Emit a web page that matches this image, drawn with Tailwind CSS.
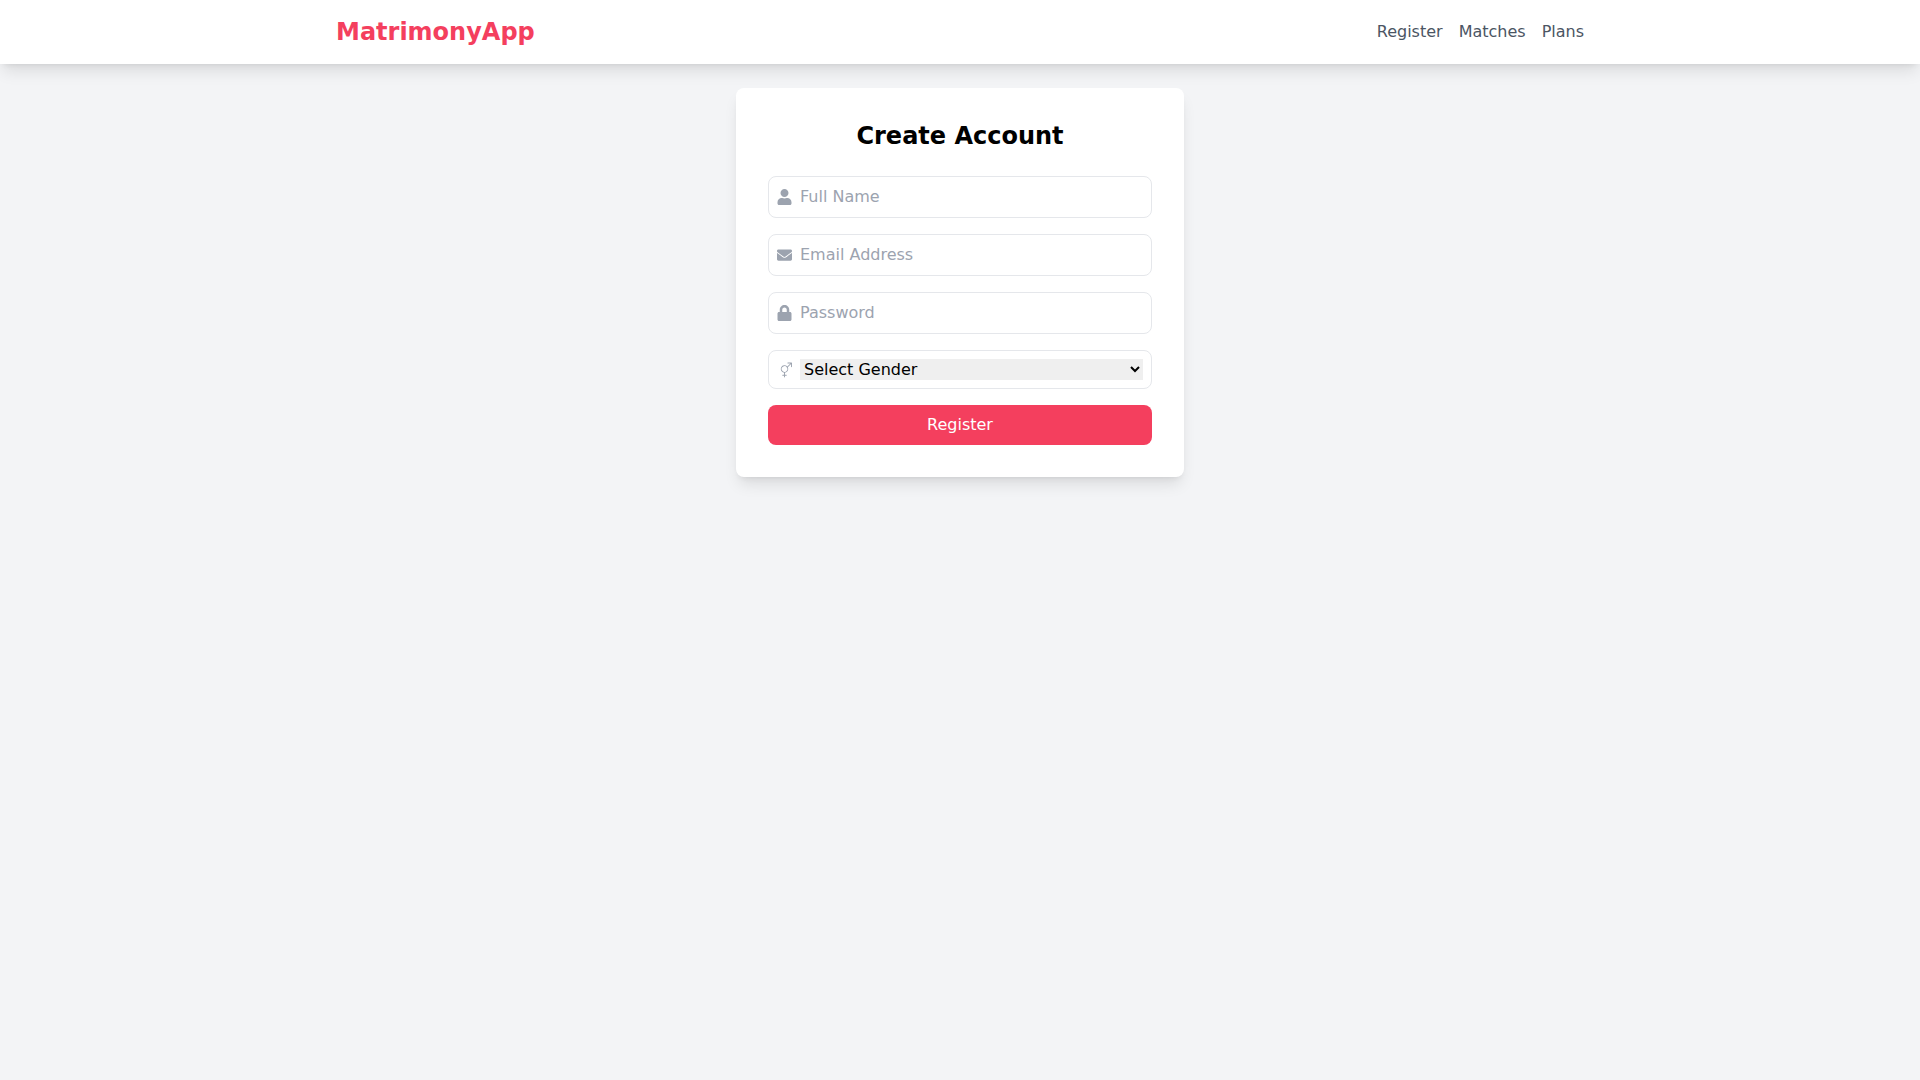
<!DOCTYPE html>
<html lang="en">
	<head>
		<meta charset="utf-8" />
		<meta name="viewport" content="width=device-width, initial-scale=1" />
		<title>MatrimonyApp</title>
		<script src="https://cdn.jsdelivr.net/npm/@tailwindcss/browser@4"></script>
	</head>

	<body class="min-h-screen bg-gray-100 font-['DejaVu_Sans',sans-serif] text-black">
		<header class="bg-white shadow-lg">
			<div class="max-w-7xl mx-auto p-4 flex justify-between items-center">
				<a href="#" class="text-2xl font-bold text-[#f43f5e]">MatrimonyApp</a>
				<nav class="flex gap-4 text-[#4b5563]">
					<a href="#register">Register</a>
					<a href="#matches">Matches</a>
					<a href="#plans">Plans</a>
				</nav>
			</div>
		</header>

		<main class="pt-6">
			<div id="register" class="max-w-md mx-auto bg-white p-8 rounded-lg shadow-lg">
				<h1 class="text-2xl font-bold text-center mb-6">Create Account</h1>
				<form class="flex flex-col gap-4">
					<div class="flex items-center border border-[#e5e7eb] rounded-lg p-2">
						<svg class="size-4 mr-2 text-[#9ca3af]" viewBox="0 0 448 512" fill="currentColor" aria-hidden="true"><path d="M224 256c70.7 0 128-57.3 128-128S294.7 0 224 0 96 57.3 96 128s57.3 128 128 128zm89.6 32h-16.7c-22.2 10.2-46.9 16-72.9 16s-50.6-5.8-72.9-16h-16.7C60.2 288 0 348.2 0 422.4V464c0 26.5 21.5 48 48 48h352c26.5 0 48-21.5 48-48v-41.6c0-74.2-60.2-134.4-134.4-134.4z"/></svg>
						<input type="text" name="name" aria-label="Full Name" placeholder="Full Name" class="w-full outline-none placeholder:text-[#9ca3af]" />
					</div>
					<div class="flex items-center border border-[#e5e7eb] rounded-lg p-2">
						<svg class="size-4 mr-2 text-[#9ca3af]" viewBox="0 0 512 512" fill="currentColor" aria-hidden="true"><path d="M502.3 190.8c3.9-3.1 9.7-.2 9.7 4.7V400c0 26.5-21.5 48-48 48H48c-26.5 0-48-21.5-48-48V195.6c0-5 5.7-7.8 9.7-4.7 22.4 17.4 52.1 39.5 154.1 113.6 21.1 15.4 56.7 47.8 92.2 47.6 35.7.3 72-32.8 92.3-47.6 102-74.1 131.6-96.3 154-113.7zM256 320c23.2.4 56.6-29.2 73.4-41.4 132.7-96.3 142.8-104.7 173.4-128.7 5.8-4.5 9.2-11.5 9.2-18.9v-19c0-26.5-21.5-48-48-48H48c-26.5 0-48 21.5-48 48v19c0 7.4 3.4 14.3 9.2 18.9 30.6 23.9 40.7 32.4 173.4 128.7 16.8 12.2 50.2 41.8 73.4 41.4z"/></svg>
						<input type="email" name="email" aria-label="Email Address" placeholder="Email Address" class="w-full outline-none placeholder:text-[#9ca3af]" />
					</div>
					<div class="flex items-center border border-[#e5e7eb] rounded-lg p-2">
						<svg class="size-4 mr-2 text-[#9ca3af]" viewBox="0 0 448 512" fill="currentColor" aria-hidden="true"><path d="M400 224h-24v-72C376 68.2 307.8 0 224 0S72 68.2 72 152v72H48c-26.5 0-48 21.5-48 48v192c0 26.5 21.5 48 48 48h352c26.5 0 48-21.5 48-48V272c0-26.5-21.5-48-48-48zm-104 0H152v-72c0-39.7 32.3-72 72-72s72 32.3 72 72v72z"/></svg>
						<input type="password" name="password" aria-label="Password" placeholder="Password" class="w-full outline-none placeholder:text-[#9ca3af]" />
					</div>
					<div class="flex items-center border border-[#e5e7eb] rounded-lg p-2">
						<svg class="size-4 mr-2 text-[#9ca3af]" viewBox="0 0 16 16" fill="currentColor" aria-hidden="true"><path fill-rule="evenodd" d="M11.5 1a.5.5 0 0 1 0-1h4a.5.5 0 0 1 .5.5v4a.5.5 0 0 1-1 0V1.707l-3.45 3.45A4 4 0 0 1 8.5 10.97V13H10a.5.5 0 0 1 0 1H8.5v1.5a.5.5 0 0 1-1 0V14H6a.5.5 0 0 1 0-1h1.5v-2.03a4 4 0 1 1 3.471-6.648L14.293 1zm-.997 4.346a3 3 0 1 0-5.006 3.309 3 3 0 0 0 5.006-3.31z"/></svg>
						<select name="gender" aria-label="Gender" class="w-full outline-none bg-[#efefef]">
							<option value="">Select Gender</option>
							<option>Male</option>
							<option>Female</option>
						</select>
					</div>
					<button type="submit" class="w-full bg-[#f43f5e] text-white py-2 rounded-lg">Register</button>
				</form>
			</div>
		</main>
	</body>
</html>
